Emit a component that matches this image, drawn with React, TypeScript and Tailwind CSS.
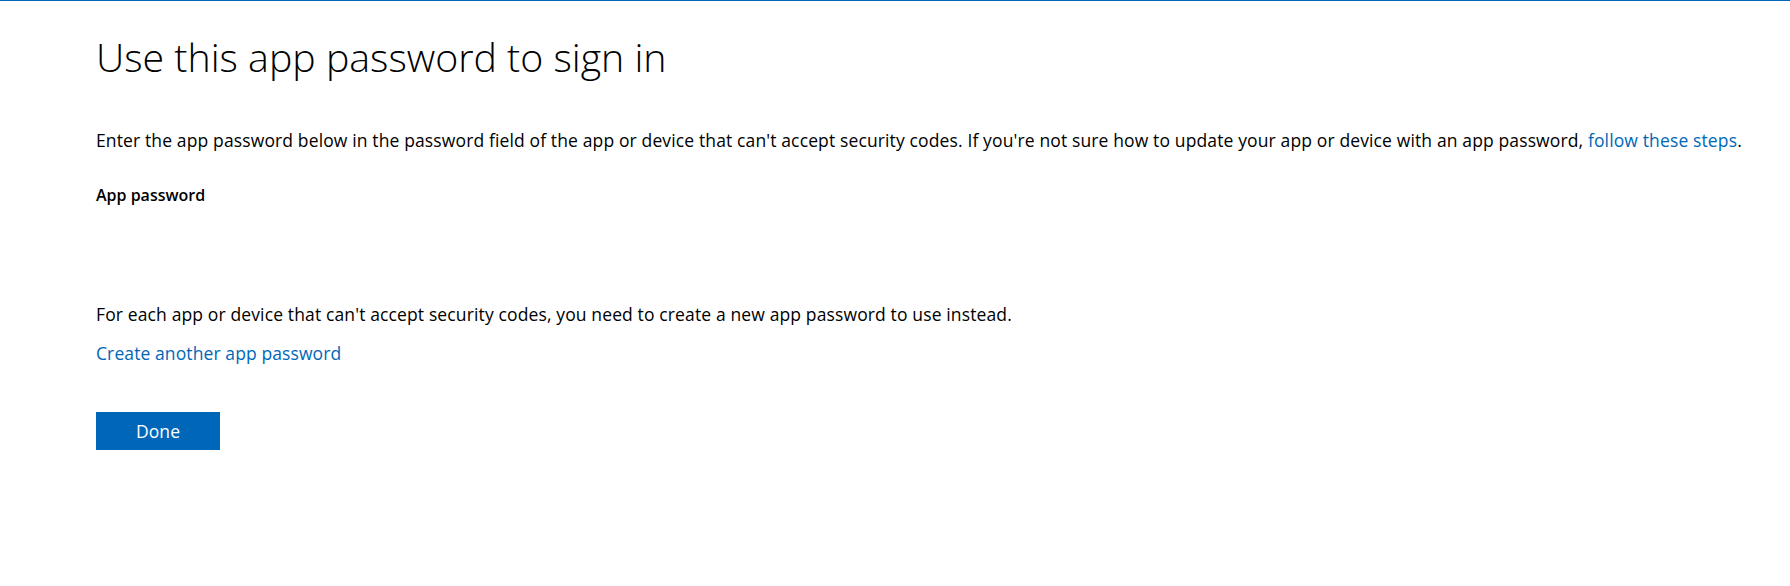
export default function App() {
	return (
		<div className="min-h-[586px] bg-white border-t border-[#0067b8] font-['Open_Sans',sans-serif] text-[#000]">
			<div className="pl-[96px] pr-10">
				<h1 className="mt-[30px] text-[39.3px] leading-[52px] font-light">
					Use this app password to sign in
				</h1>
				<p className="mt-[46px] text-[17.5px] leading-[22px] tracking-[0.13px]">
					Enter the app password below in the password field of the app or device that can't accept security
					codes. If you're not sure how to update your app or device with an app password,{" "}
					<a href="#" className="text-[#0067b8]">
						follow these steps
					</a>
					.
				</p>
				<div className="mt-[33px] text-[16px] leading-[22px] font-semibold">App password</div>
				<p className="mt-[97px] text-[17.5px] leading-[22px] tracking-[0.13px]">
					For each app or device that can't accept security codes, you need to create a new app password to
					use instead.
				</p>
				<a
					href="#"
					className="block mt-[17px] w-fit text-[17.5px] leading-[22px] tracking-[0.1px] text-[#0067b8]"
				>
					Create another app password
				</a>
				<button
					type="button"
					className="mt-[48px] w-[124px] h-[38px] bg-[#0067b8] text-white text-[17.5px] tracking-[0.1px]"
				>
					Done
				</button>
			</div>
		</div>
	);
}
